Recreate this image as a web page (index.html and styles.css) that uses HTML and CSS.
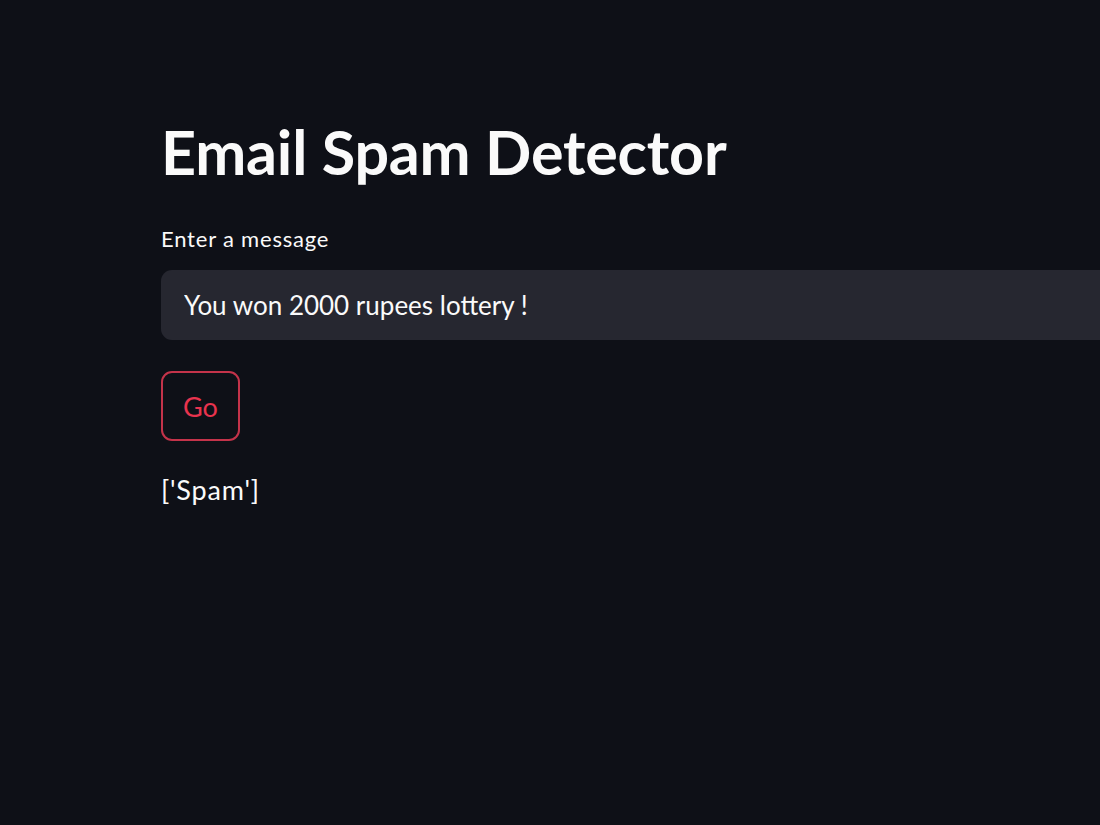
FILE: index.html
```html
<!DOCTYPE html>
<html lang="en">
<head>
    <meta charset="UTF-8">
    <meta name="viewport" content="width=device-width, initial-scale=1.0">
    <title>Email Spam Detector</title>
    <link rel="stylesheet" href="styles.css">
</head>
<body>
    <div class="main">
        <div class="block">
            <h1 class="title">Email Spam Detector</h1>
            <label class="field-label" for="messageInput">Enter a message</label>
            <div class="input-wrap">
                <input type="text" id="messageInput" value="You won 2000 rupees lottery !" autocomplete="off">
            </div>
            <button class="go-btn" type="button">Go</button>
            <p class="result">['Spam']</p>
        </div>
    </div>
</body>
</html>
```

FILE: styles.css
```css
html, body {
    margin: 0;
    height: 100%;
    overflow: hidden;
}

body {
    font-family: Lato, 'Noto Sans', sans-serif;
    background-color: #0e1017;
    color: #fafafa;
}

.main {
    padding: 116px 0 0 161px;
}

.block {
    width: 939px;
    display: flex;
    flex-direction: column;
    align-items: flex-start;
}

.title {
    font-size: 61px;
    font-weight: 700;
    margin: 0;
    line-height: 72px;
    letter-spacing: -0.2px;
}

.field-label {
    font-size: 22px;
    margin-top: 37px;
    line-height: 28px;
    letter-spacing: 0.8px;
}

.input-wrap {
    width: 100%;
    margin-top: 17px;
}

.input-wrap input {
    box-sizing: border-box;
    width: 100%;
    height: 70px;
    border: none;
    border-radius: 11px 0 0 11px;
    background-color: #262730;
    color: #fafafa;
    font-family: inherit;
    font-size: 26px;
    padding: 0 23px;
    outline: none;
}

.go-btn {
    margin-top: 31px;
    width: 79px;
    height: 70px;
    background-color: #0e1017;
    border: 2px solid #c4334a;
    border-radius: 11px;
    color: #e8334e;
    font-family: inherit;
    font-size: 27px;
    cursor: pointer;
}

.result {
    margin: 32px 0 0;
    font-size: 27px;
    line-height: 34px;
    letter-spacing: 0.8px;
}
```
